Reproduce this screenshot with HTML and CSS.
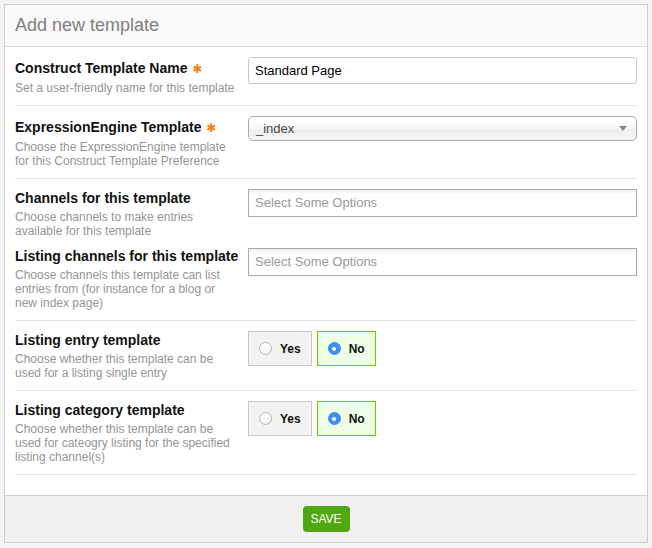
FILE: index.html
```html
<!DOCTYPE html>
<html lang="en">
<head>
<meta charset="utf-8">
<title>Add new template</title>
<link rel="stylesheet" href="styles.css">
</head>
<body>
<div class="panel">
  <div class="panel-header">
    <h1 class="panel-title">Add new template</h1>
  </div>
  <form class="panel-body">
    <div class="section">
      <div class="field">
        <div class="field-info">
          <div class="field-label is-required">Construct Template Name <span class="req">✱</span></div>
          <div class="field-desc">Set a user-friendly name for this template</div>
        </div>
        <div class="field-control">
          <input class="text-input" type="text" value="Standard Page">
        </div>
      </div>
    </div>
    <div class="section">
      <div class="field">
        <div class="field-info">
          <div class="field-label is-required">ExpressionEngine Template <span class="req">✱</span></div>
          <div class="field-desc">Choose the ExpressionEngine template for this Construct Template Preference</div>
        </div>
        <div class="field-control">
          <div class="select">
            <span class="select-value">_index</span>
            <span class="select-arrow"></span>
          </div>
        </div>
      </div>
    </div>
    <div class="section">
      <div class="field">
        <div class="field-info">
          <div class="field-label">Channels for this template</div>
          <div class="field-desc">Choose channels to make entries available for this template</div>
        </div>
        <div class="field-control">
          <div class="multi-select">Select Some Options</div>
        </div>
      </div>
      <div class="field">
        <div class="field-info">
          <div class="field-label">Listing channels for this template</div>
          <div class="field-desc">Choose channels this template can list entries from (for instance for a blog or new index page)</div>
        </div>
        <div class="field-control">
          <div class="multi-select shifted">Select Some Options</div>
        </div>
      </div>
    </div>
    <div class="section">
      <div class="field">
        <div class="field-info">
          <div class="field-label">Listing entry template</div>
          <div class="field-desc">Choose whether this template can be used for a listing single entry</div>
        </div>
        <div class="field-control radio-group">
          <label class="radio-box"><span class="radio"></span>Yes</label>
          <label class="radio-box is-checked"><span class="radio"></span>No</label>
        </div>
      </div>
    </div>
    <div class="section">
      <div class="field">
        <div class="field-info">
          <div class="field-label">Listing category template</div>
          <div class="field-desc">Choose whether this template can be used for cateogry listing for the specified listing channel(s)</div>
        </div>
        <div class="field-control radio-group">
          <label class="radio-box"><span class="radio"></span>Yes</label>
          <label class="radio-box is-checked"><span class="radio"></span>No</label>
        </div>
      </div>
    </div>
  </form>
  <div class="panel-footer">
    <button class="btn-save" type="button">SAVE</button>
  </div>
</div>
</body>
</html>
```
FILE: styles.css
```css
* { box-sizing: border-box; }

html, body {
  margin: 0;
  padding: 0;
}

body {
  background: #f3f3f3;
  font-family: "Liberation Sans", Arial, Helvetica, sans-serif;
  color: #000;
  padding: 4px;
}

.panel {
  border: 1px solid #cfcfcf;
  background: #fff;
}

.panel-header {
  background: #f9f9f9;
  border-bottom: 1px solid #dedede;
  padding: 10px 10px;
}

.panel-title {
  margin: 0;
  font-size: 18px;
  line-height: 21px;
  font-weight: normal;
  color: #808080;
}

.panel-body {
  margin: 0;
  padding: 0 10px 20px;
}

.section {
  border-bottom: 1px solid #e3e3e3;
  padding: 10px 0 10px;
  display: flex;
  flex-direction: column;
  gap: 9px;
}

.field {
  display: flex;
  gap: 8px;
  align-items: flex-start;
}

.field-info {
  width: 225px;
  flex: none;
}

.field-label {
  font-size: 14px;
  line-height: 18px;
  font-weight: bold;
  color: #111;
}

.field-label.is-required {
  padding-top: 2px;
}

.req {
  color: #ff7a12;
  font-family: "DejaVu Sans", sans-serif;
  font-size: 12px;
  margin-left: 1px;
}

.field-desc {
  margin-top: 3px;
  font-size: 12px;
  line-height: 14px;
  color: #959595;
}

.field-control {
  flex: 1;
  min-width: 0;
}

.text-input {
  display: block;
  width: 100%;
  height: 27px;
  border: 1px solid #c8c8c8;
  border-radius: 3px;
  padding: 0 6px;
  font-family: inherit;
  font-size: 13px;
  color: #000;
  background: #fff;
  outline: none;
}

.select {
  position: relative;
  height: 25px;
  border: 1px solid #aaa;
  border-radius: 5px;
  background: linear-gradient(#ffffff 20%, #f6f6f6 50%, #eeeeee 52%, #f4f4f4 100%);
  padding: 0 7px;
  font-size: 13px;
  line-height: 23px;
  color: #444;
}

.select-arrow {
  position: absolute;
  right: 9px;
  top: 9px;
  width: 0;
  height: 0;
  border-left: 4px solid transparent;
  border-right: 4px solid transparent;
  border-top: 5px solid #888;
}

.multi-select {
  height: 28px;
  border: 1px solid #aaa;
  background: linear-gradient(#eeeeee 1%, #ffffff 15%);
  padding: 0 6px;
  font-size: 13px;
  line-height: 26px;
  color: #999;
}

.multi-select.shifted {
  margin-top: 1px;
}

.radio-group {
  display: flex;
  gap: 5px;
}

.radio-box {
  display: flex;
  align-items: center;
  gap: 8px;
  height: 35px;
  padding: 0 10px;
  border: 1px solid #c8c8c8;
  background: #f2f2f2;
  font-size: 12px;
  font-weight: bold;
  color: #111;
}

.radio-box.is-checked {
  border-color: #66cc00;
  background: #eefee6;
}

.radio {
  width: 13px;
  height: 13px;
  border-radius: 50%;
  border: 1px solid #b5b5b5;
  background: linear-gradient(#ffffff, #f3f3f3);
  position: relative;
  flex: none;
}

.is-checked .radio {
  border-color: #3a8ef0;
  background: #3d90f2;
}

.is-checked .radio::after {
  content: "";
  position: absolute;
  left: 50%;
  top: 50%;
  width: 4px;
  height: 4px;
  margin: -2px 0 0 -2px;
  border-radius: 50%;
  background: #fff;
}

.panel-footer {
  border-top: 1px solid #cfcfcf;
  background: #f0f0f0;
  padding: 10px;
  display: flex;
  justify-content: center;
}

.btn-save {
  width: 47px;
  height: 26px;
  border: none;
  border-radius: 4px;
  background: #4fa80f;
  color: #fff;
  font-family: inherit;
  font-size: 12px;
  padding: 0;
}
```
